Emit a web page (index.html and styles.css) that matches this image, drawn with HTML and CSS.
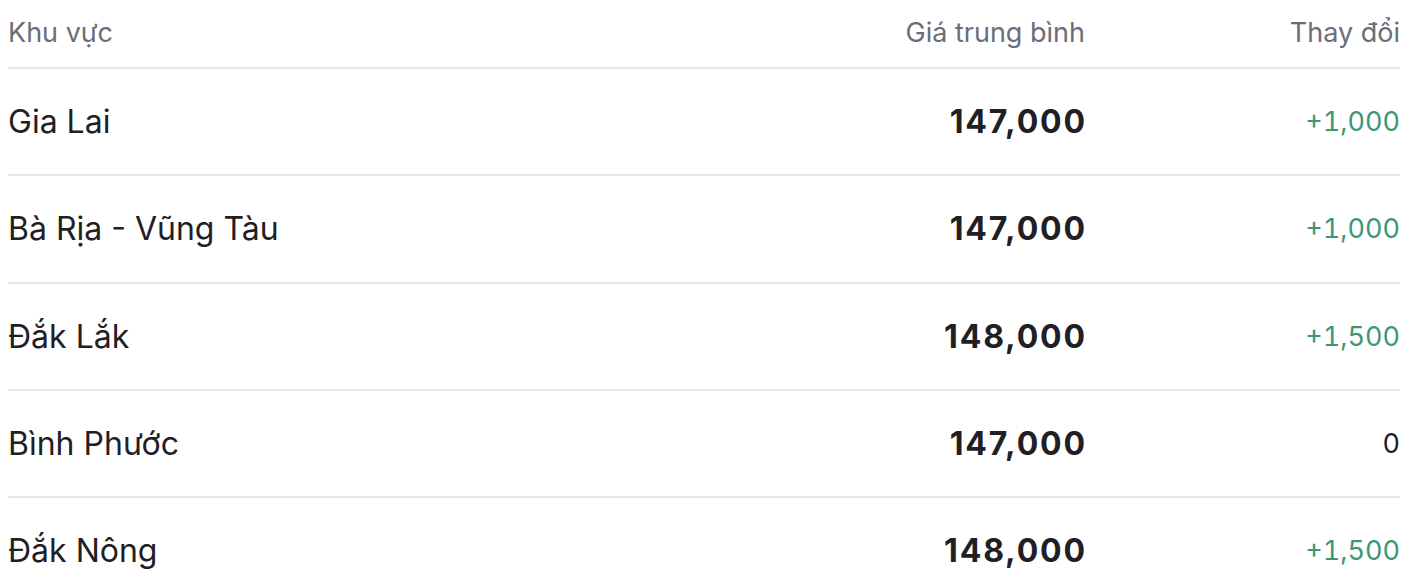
FILE: index.html
```html
<!DOCTYPE html>
<html lang="vi">
<head>
<meta charset="utf-8">
<link rel="stylesheet" href="styles.css">
</head>
<body>
<div class="table">
  <div class="row head">
    <div class="c-name">Khu vực</div>
    <div class="c-price">Giá trung bình</div>
    <div class="c-change">Thay đổi</div>
  </div>
  <div class="row">
    <div class="c-name">Gia Lai</div>
    <div class="c-price">147,000</div>
    <div class="c-change up">+1,000</div>
  </div>
  <div class="row">
    <div class="c-name">Bà Rịa - Vũng Tàu</div>
    <div class="c-price">147,000</div>
    <div class="c-change up">+1,000</div>
  </div>
  <div class="row">
    <div class="c-name">Đắk Lắk</div>
    <div class="c-price">148,000</div>
    <div class="c-change up">+1,500</div>
  </div>
  <div class="row">
    <div class="c-name">Bình Phước</div>
    <div class="c-price">147,000</div>
    <div class="c-change">0</div>
  </div>
  <div class="row">
    <div class="c-name">Đắk Nông</div>
    <div class="c-price">148,000</div>
    <div class="c-change up">+1,500</div>
  </div>
</div>
</body>
</html>
```
FILE: styles.css
```css
html, body {
  margin: 0;
  background: #ffffff;
}
body {
  padding: 0 8px;
  font-family: Inter, "Noto Sans", sans-serif;
  color: #1f2024;
}
.table {
  display: flex;
  flex-direction: column;
}
.row {
  display: grid;
  grid-template-columns: 1fr 400px 315px;
  align-items: center;
  height: 105.25px;
  border-bottom: 2px solid #e6e6ea;
  font-size: 32px;
}
.row.head {
  height: 67px;
  align-items: start;
  font-size: 27px;
  color: #6b6e76;
}
.row.head > div {
  margin-top: 16px;
}
.c-price {
  text-align: right;
}
.row:not(.head) .c-price {
  font-weight: 700;
  letter-spacing: 1.8px;
  margin-right: -1.8px;
}
.c-change {
  text-align: right;
}
.row:not(.head) .c-change {
  font-size: 27px;
  font-variant-numeric: tabular-nums;
}
.up {
  color: #3d9678;
}
```
